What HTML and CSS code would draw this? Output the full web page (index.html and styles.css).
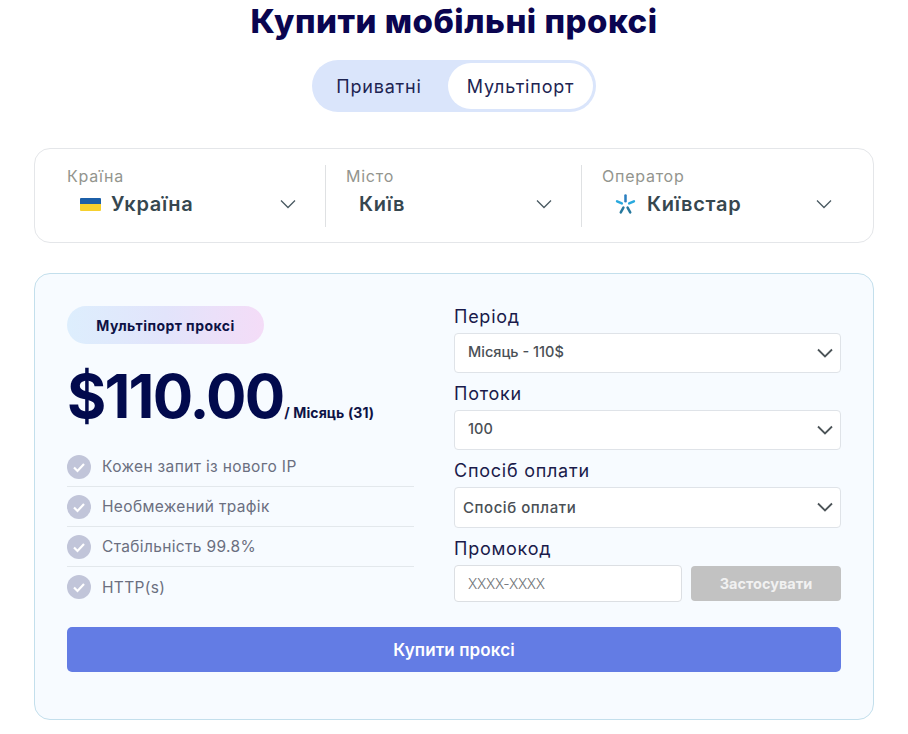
FILE: index.html
```html
<!DOCTYPE html>
<html lang="uk">
<head>
    <meta charset="UTF-8">
    <meta name="viewport" content="width=device-width, initial-scale=1.0">
    <title>Купити мобільні проксі</title>
    <link rel="stylesheet" href="styles.css">
</head>
<body>
    <div class="page">
        <h1 class="title">Купити мобільні проксі</h1>

        <div class="tabs-row">
            <div class="tabs">
                <a class="tab">Приватні</a>
                <a class="tab tab-active">Мультіпорт</a>
            </div>
        </div>

        <div class="filters">
            <div class="filter filter-country">
                <div class="filter-label">Країна</div>
                <div class="filter-value">
                    <span class="flag"><span class="flag-blue"></span><span class="flag-yellow"></span></span>
                    <span class="filter-text">Україна</span>
                    <svg class="filter-arrow" viewBox="0 0 16 10"><path d="M1 1.500l7 7 7-7"/></svg>
                </div>
            </div>
            <div class="filter filter-city">
                <div class="filter-label">Місто</div>
                <div class="filter-value">
                    <span class="filter-text">Київ</span>
                    <svg class="filter-arrow" viewBox="0 0 16 10"><path d="M1 1.500l7 7 7-7"/></svg>
                </div>
            </div>
            <div class="filter filter-operator">
                <div class="filter-label">Оператор</div>
                <div class="filter-value">
                    <svg class="star" viewBox="0 0 20 20">
                        <path class="star-top" d="M10 1.500v5.500"/>
                        <path class="star-side" d="M2 7l4.500 2"/>
                        <path class="star-side" d="M18 7l-4.500 2"/>
                        <path class="star-low" d="M5.500 17.500l2.500-4.500"/>
                        <path class="star-low" d="M14.500 17.500l-2.500-4.500"/>
                    </svg>
                    <span class="filter-text">Київстар</span>
                    <svg class="filter-arrow" viewBox="0 0 16 10"><path d="M1 1.500l7 7 7-7"/></svg>
                </div>
            </div>
        </div>

        <div class="order">
            <div class="order-cols">
                <div class="info">
                    <div class="badge">Мультіпорт проксі</div>
                    <div class="price"><span class="price-num">$110.00</span><span class="price-per">/ Місяць (31)</span></div>
                    <ul class="features">
                        <li><svg class="check" viewBox="0 0 24 24"><circle cx="12" cy="12" r="12"/><path d="M7 12.500l3.500 3.500 6.500-7"/></svg>Кожен запит із нового IP</li>
                        <li><svg class="check" viewBox="0 0 24 24"><circle cx="12" cy="12" r="12"/><path d="M7 12.500l3.500 3.500 6.500-7"/></svg>Необмежений трафік</li>
                        <li><svg class="check" viewBox="0 0 24 24"><circle cx="12" cy="12" r="12"/><path d="M7 12.500l3.500 3.500 6.500-7"/></svg>Стабільність 99.8%</li>
                        <li><svg class="check" viewBox="0 0 24 24"><circle cx="12" cy="12" r="12"/><path d="M7 12.500l3.500 3.500 6.500-7"/></svg>HTTP(s)</li>
                    </ul>
                </div>
                <div class="form">
                    <div class="form-label">Період</div>
                    <div class="select">Місяць - 110$<svg class="select-arrow" viewBox="0 0 16 10"><path d="M1 1.500l7 7 7-7"/></svg></div>
                    <div class="form-label">Потоки</div>
                    <div class="select">100<svg class="select-arrow" viewBox="0 0 16 10"><path d="M1 1.500l7 7 7-7"/></svg></div>
                    <div class="form-label">Спосіб оплати</div>
                    <div class="select select-pay">Спосіб оплати<svg class="select-arrow" viewBox="0 0 16 10"><path d="M1 1.500l7 7 7-7"/></svg></div>
                    <div class="form-label">Промокод</div>
                    <div class="promo">
                        <div class="promo-input">XXXX-XXXX</div>
                        <div class="promo-btn">Застосувати</div>
                    </div>
                </div>
            </div>
            <div class="buy">Купити проксі</div>
        </div>
    </div>
</body>
</html>
```

FILE: styles.css
```css
body { font-family: "Inter", "Noto Sans", sans-serif; margin: 0; padding: 0; background-color: #fff; color: #0b0b50; }
.page { padding: 0 34px 14px; }
.title { margin: 0; padding-top: 1px; height: 43px; line-height: 40px; font-size: 33px; font-weight: 800; text-align: center; color: #0a0550; letter-spacing: 0.5px; }

.tabs-row { display: flex; justify-content: center; margin-top: 16px; }
.tabs { display: flex; width: 284px; height: 52px; box-sizing: border-box; padding: 3px; background-color: #dae5fb; border-radius: 26px; }
.tab { display: flex; align-items: center; justify-content: center; font-size: 18px; color: #1d2452; letter-spacing: 0.8px; }
.tab:first-child { width: 128px; padding-right: 5px; }
.tab-active { width: 145px; background-color: #fff; border-radius: 23px; }

.filters { display: flex; height: 95px; box-sizing: border-box; margin-top: 36px; border: 1px solid #e4e6e9; border-radius: 16px; padding-top: 16px; }
.filter { box-sizing: border-box; height: 62px; }
.filter-country { width: 291px; padding-left: 32px; border-right: 1px solid #dfe1e3; }
.filter-city { width: 256px; padding-left: 20px; border-right: 1px solid #dfe1e3; }
.filter-operator { flex: 1; padding-left: 20px; }
.filter-label { font-size: 16px; line-height: 20px; margin-top: 1px; color: #93958e; letter-spacing: 0.75px; }
.filter-value { display: flex; align-items: center; height: 28px; margin-top: 4px; padding-left: 13px; }
.filter-text { font-size: 20px; font-weight: 600; color: #36474f; letter-spacing: 0.7px; }
.filter-arrow { width: 16px; height: 10px; margin-left: auto; fill: none; stroke: #4a5a62; stroke-width: 1.300; }
.filter-country .filter-arrow { margin-right: 29px; }
.filter-city .filter-arrow { margin-right: 29px; }
.filter-operator .filter-arrow { margin-right: 41px; }
.flag { display: flex; flex-direction: column; width: 21px; height: 13px; margin-right: 10px; border-radius: 1px; overflow: hidden; }
.flag-blue { flex: 1; background-color: #1c5fa8; }
.flag-yellow { flex: 1; background-color: #f6d02f; }
.star { width: 21px; height: 21px; margin-right: 11px; fill: none; stroke-width: 2.400; stroke-linecap: round; }
.star-top { stroke: #2b7fc0; }
.star-side { stroke: #29a9de; }
.star-low { stroke: #27799e; }

.order { box-sizing: border-box; height: 447px; margin-top: 30px; padding: 32px 32px 0; background-color: #f7fbff; border: 1px solid #c3dfec; border-radius: 16px; }
.order-cols { display: flex; gap: 40px; height: 321px; }

.info { width: 347px; }
.badge { width: 197px; height: 38px; display: flex; align-items: center; justify-content: center; border-radius: 19px; background-image: linear-gradient(90deg, #ddeefd, #e2e4fb 50%, #f4dcf7); font-size: 14px; font-weight: 700; color: #0e1245; letter-spacing: 0.45px; }
.price { display: flex; align-items: baseline; margin-top: 19px; height: 66px; line-height: 66px; color: #020a4d; }
.price-num { font-size: 60px; font-weight: 700; letter-spacing: -1.800px; }
.price-per { font-size: 14px; font-weight: 700; margin-left: 1px; color: #0e1245; letter-spacing: 0.1px; }
.features { list-style: none; margin: 18px 0 0; padding: 0; }
.features li { display: flex; align-items: center; height: 40px; box-sizing: border-box; font-size: 15.500px; color: #6b6f80; letter-spacing: 0.35px; border-bottom: 1px solid #e3e8ec; }
.features li:last-child { border-bottom: none; }
.check { width: 24px; height: 24px; margin-right: 11px; }
.check circle { fill: #c1c5d9; }
.check path { fill: none; stroke: #fff; stroke-width: 2.200; }

.form { flex: 1; }
.form-label { font-size: 18px; line-height: 24px; color: #1a1a4a; height: 28px; margin-top: -1px; letter-spacing: 0.75px; }
.select { position: relative; display: flex; align-items: center; height: 40px; box-sizing: border-box; padding-left: 13px; padding-bottom: 3px; margin-bottom: 10px; background-color: #fff; border: 1px solid #dfe3e8; border-radius: 4px; font-size: 14.500px; font-weight: 500; color: #4a5056; }
.select-pay { height: 41px; padding-left: 8px; padding-bottom: 0; font-size: 15px; letter-spacing: 0.55px; }
.select-arrow { width: 16px; height: 10px; position: absolute; right: 7px; top: 14px; fill: none; stroke: #4c5458; stroke-width: 1.800; }
.promo { display: flex; gap: 9px; }
.promo-input { flex: 1; height: 37px; box-sizing: border-box; display: flex; align-items: center; padding-left: 13px; background-color: #fff; border: 1px solid #dcdfe3; border-radius: 4px; font-size: 14px; font-weight: 300; color: #6f7377; letter-spacing: -0.3px; }
.promo-btn { width: 150px; height: 35px; margin-top: 1px; display: flex; align-items: center; justify-content: center; background-color: #c2c2c2; border-radius: 4px; font-size: 14.500px; font-weight: 700; color: #f1f1f1; }

.buy { display: flex; align-items: center; justify-content: center; height: 45px; background-color: #637ce4; border-radius: 5px; color: #fff; font-size: 17px; font-weight: 600; letter-spacing: 0.1px; }
```
